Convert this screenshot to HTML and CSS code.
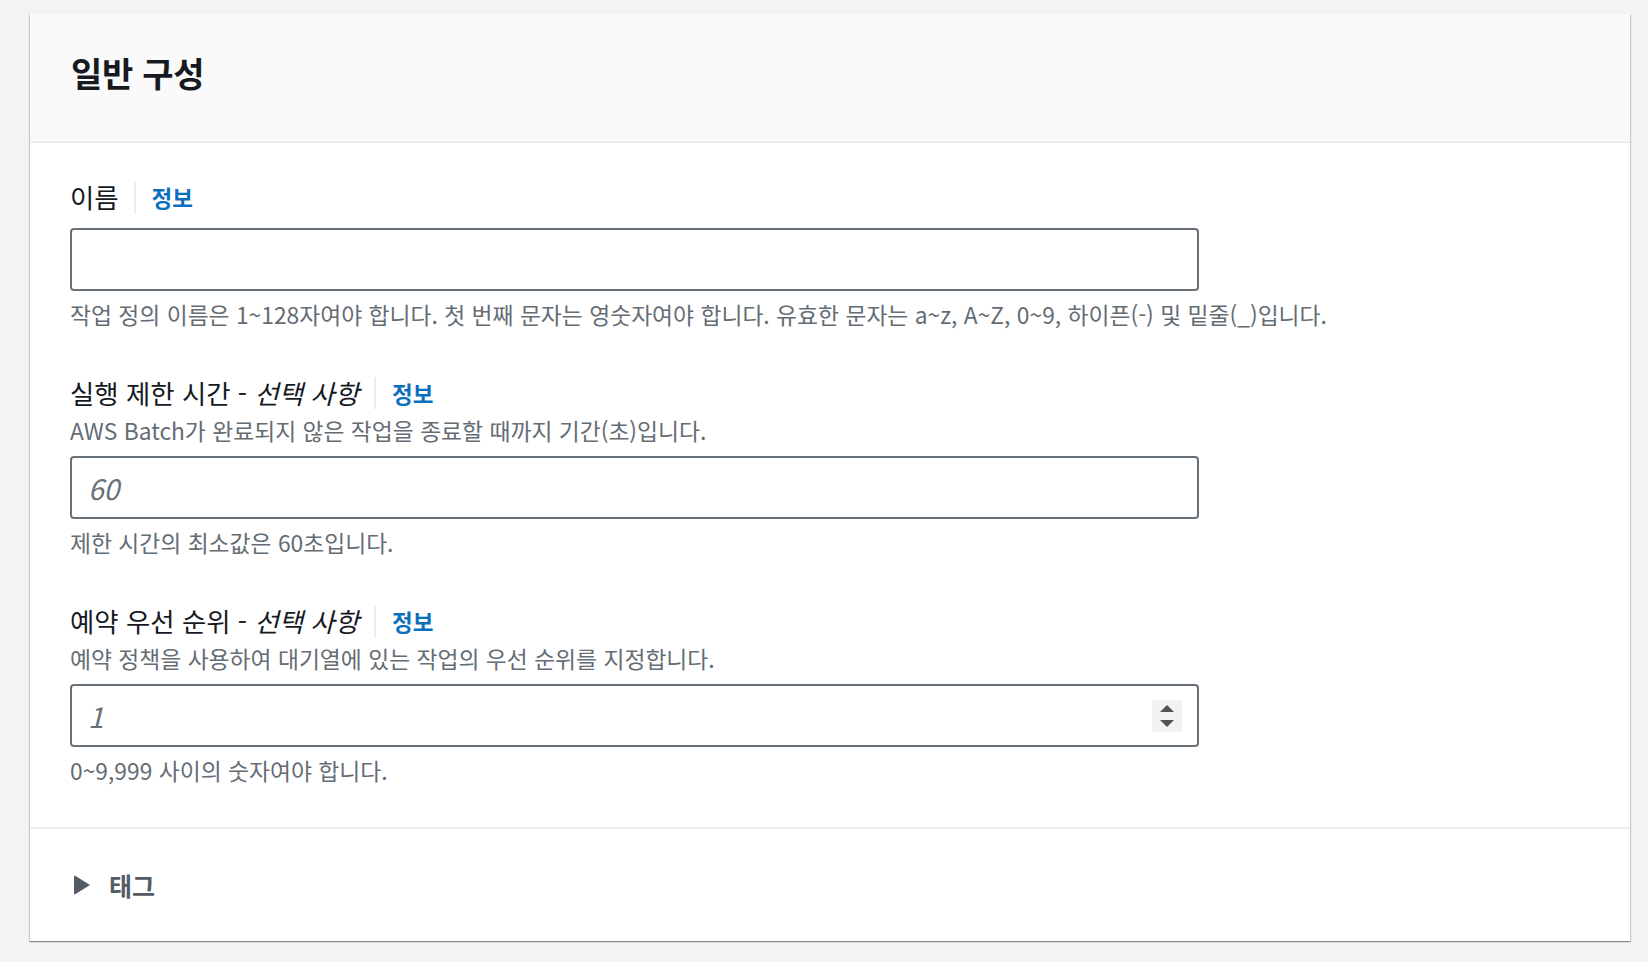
FILE: index.html
```html
<!DOCTYPE html>
<html lang="ko">
<head>
<meta charset="utf-8">
<title>일반 구성</title>
<link rel="stylesheet" href="styles.css">
</head>
<body>
<div class="card">
  <div class="card-header">
    <h2 class="title">일반 구성</h2>
  </div>
  <div class="card-body">
    <div class="field">
      <div class="label-row"><span class="label">이름</span><span class="sep"></span><a class="info">정보</a></div>
      <div class="input first"></div>
      <div class="desc after">작업 정의 이름은 1~128자여야 합니다. 첫 번째 문자는 영숫자여야 합니다. 유효한 문자는 a~z, A~Z, 0~9, 하이픈(-) 및 밑줄(_)입니다.</div>
    </div>
    <div class="field">
      <div class="label-row"><span class="label">실행 제한 시간 - <i>선택 사항</i></span><span class="sep"></span><a class="info">정보</a></div>
      <div class="desc before">AWS Batch가 완료되지 않은 작업을 종료할 때까지 기간(초)입니다.</div>
      <div class="input"><span class="placeholder">60</span></div>
      <div class="desc after">제한 시간의 최소값은 60초입니다.</div>
    </div>
    <div class="field">
      <div class="label-row"><span class="label">예약 우선 순위 - <i>선택 사항</i></span><span class="sep"></span><a class="info">정보</a></div>
      <div class="desc before">예약 정책을 사용하여 대기열에 있는 작업의 우선 순위를 지정합니다.</div>
      <div class="input"><span class="placeholder">1</span>
        <span class="spinner"><span class="up"></span><span class="down"></span></span>
      </div>
      <div class="desc after">0~9,999 사이의 숫자여야 합니다.</div>
    </div>
  </div>
  <div class="card-footer">
    <span class="caret"></span><span class="tags">태그</span>
  </div>
</div>
</body>
</html>
```
FILE: styles.css
```css
html, body {
  margin: 0;
  padding: 0;
}
body {
  background: #f2f3f3;
  font-family: "Noto Sans CJK KR", "Noto Sans", sans-serif;
  color: #16191f;
  height: 962px;
  overflow: hidden;
}
.card {
  margin: 14px 0 0 30px;
  width: 1600px;
  background: #ffffff;
  box-shadow: 0 1px 1px 0 rgba(0, 28, 36, 0.3), 1px 1px 1px 0 rgba(0, 28, 36, 0.15), -1px 1px 1px 0 rgba(0, 28, 36, 0.15);
}
.card-header {
  background: #fafafa;
  border-bottom: 2px solid #eaeded;
  display: flex;
  align-items: center;
  padding-left: 41px;
  box-sizing: border-box;
  height: 129px;
}
.title {
  margin: 0;
  font-size: 34px;
  font-weight: 700;
  line-height: 40px;
  padding-bottom: 10px;
  letter-spacing: -0.3px;
}
.card-body {
  padding: 38px 40px 42px 40px;
  display: flex;
  flex-direction: column;
  gap: 48px;
}
.field {
  display: flex;
  flex-direction: column;
  width: 1129px;
}
.label-row {
  display: flex;
  align-items: center;
  height: 32px;
}
.label {
  font-size: 26.4px;
  line-height: 32px;
}
.label i {
  font-style: italic;
}
.sep {
  width: 2px;
  height: 32px;
  background: #eaeded;
  margin: 0 16px 0 15px;
}
.info {
  color: #0a6fbd;
  font-weight: 700;
  font-size: 22.5px;
  line-height: 32px;
}
.desc {
  font-size: 22.8px;
  line-height: 28px;
  color: #646c74;
  white-space: nowrap;
}
.desc.before {
  margin-top: 8px;
  margin-bottom: 11px;
}
.desc.after {
  margin-top: 10px;
}
.input {
  height: 63px;
  box-sizing: border-box;
  border: 2px solid #687078;
  border-radius: 4px;
  display: flex;
  align-items: center;
  padding-left: 16px;
  position: relative;
}
.input.first {
  margin-top: 15px;
}
.placeholder {
  font-size: 28px;
  font-style: italic;
  color: #687078;
}
.spinner {
  position: absolute;
  right: 15px;
  top: 14px;
  width: 30px;
  height: 32px;
  background: #f2f2f2;
}
.spinner .up, .spinner .down {
  position: absolute;
  left: 8px;
  width: 0;
  height: 0;
  border-left: 7px solid transparent;
  border-right: 7px solid transparent;
}
.spinner .up {
  top: 5px;
  border-bottom: 7px solid #545454;
}
.spinner .down {
  top: 20px;
  border-top: 7px solid #545454;
}
.card-footer {
  height: 114px;
  border-top: 2px solid #eaeded;
  box-sizing: border-box;
  display: flex;
  align-items: center;
  padding-left: 44px;
}
.caret {
  width: 0;
  height: 0;
  border-top: 10px solid transparent;
  border-bottom: 10px solid transparent;
  border-left: 16px solid #545b64;
  border-radius: 2px;
  margin-right: 19px;
}
.tags {
  font-size: 25px;
  font-weight: 700;
  color: #545b64;
  line-height: 32px;
}
```
